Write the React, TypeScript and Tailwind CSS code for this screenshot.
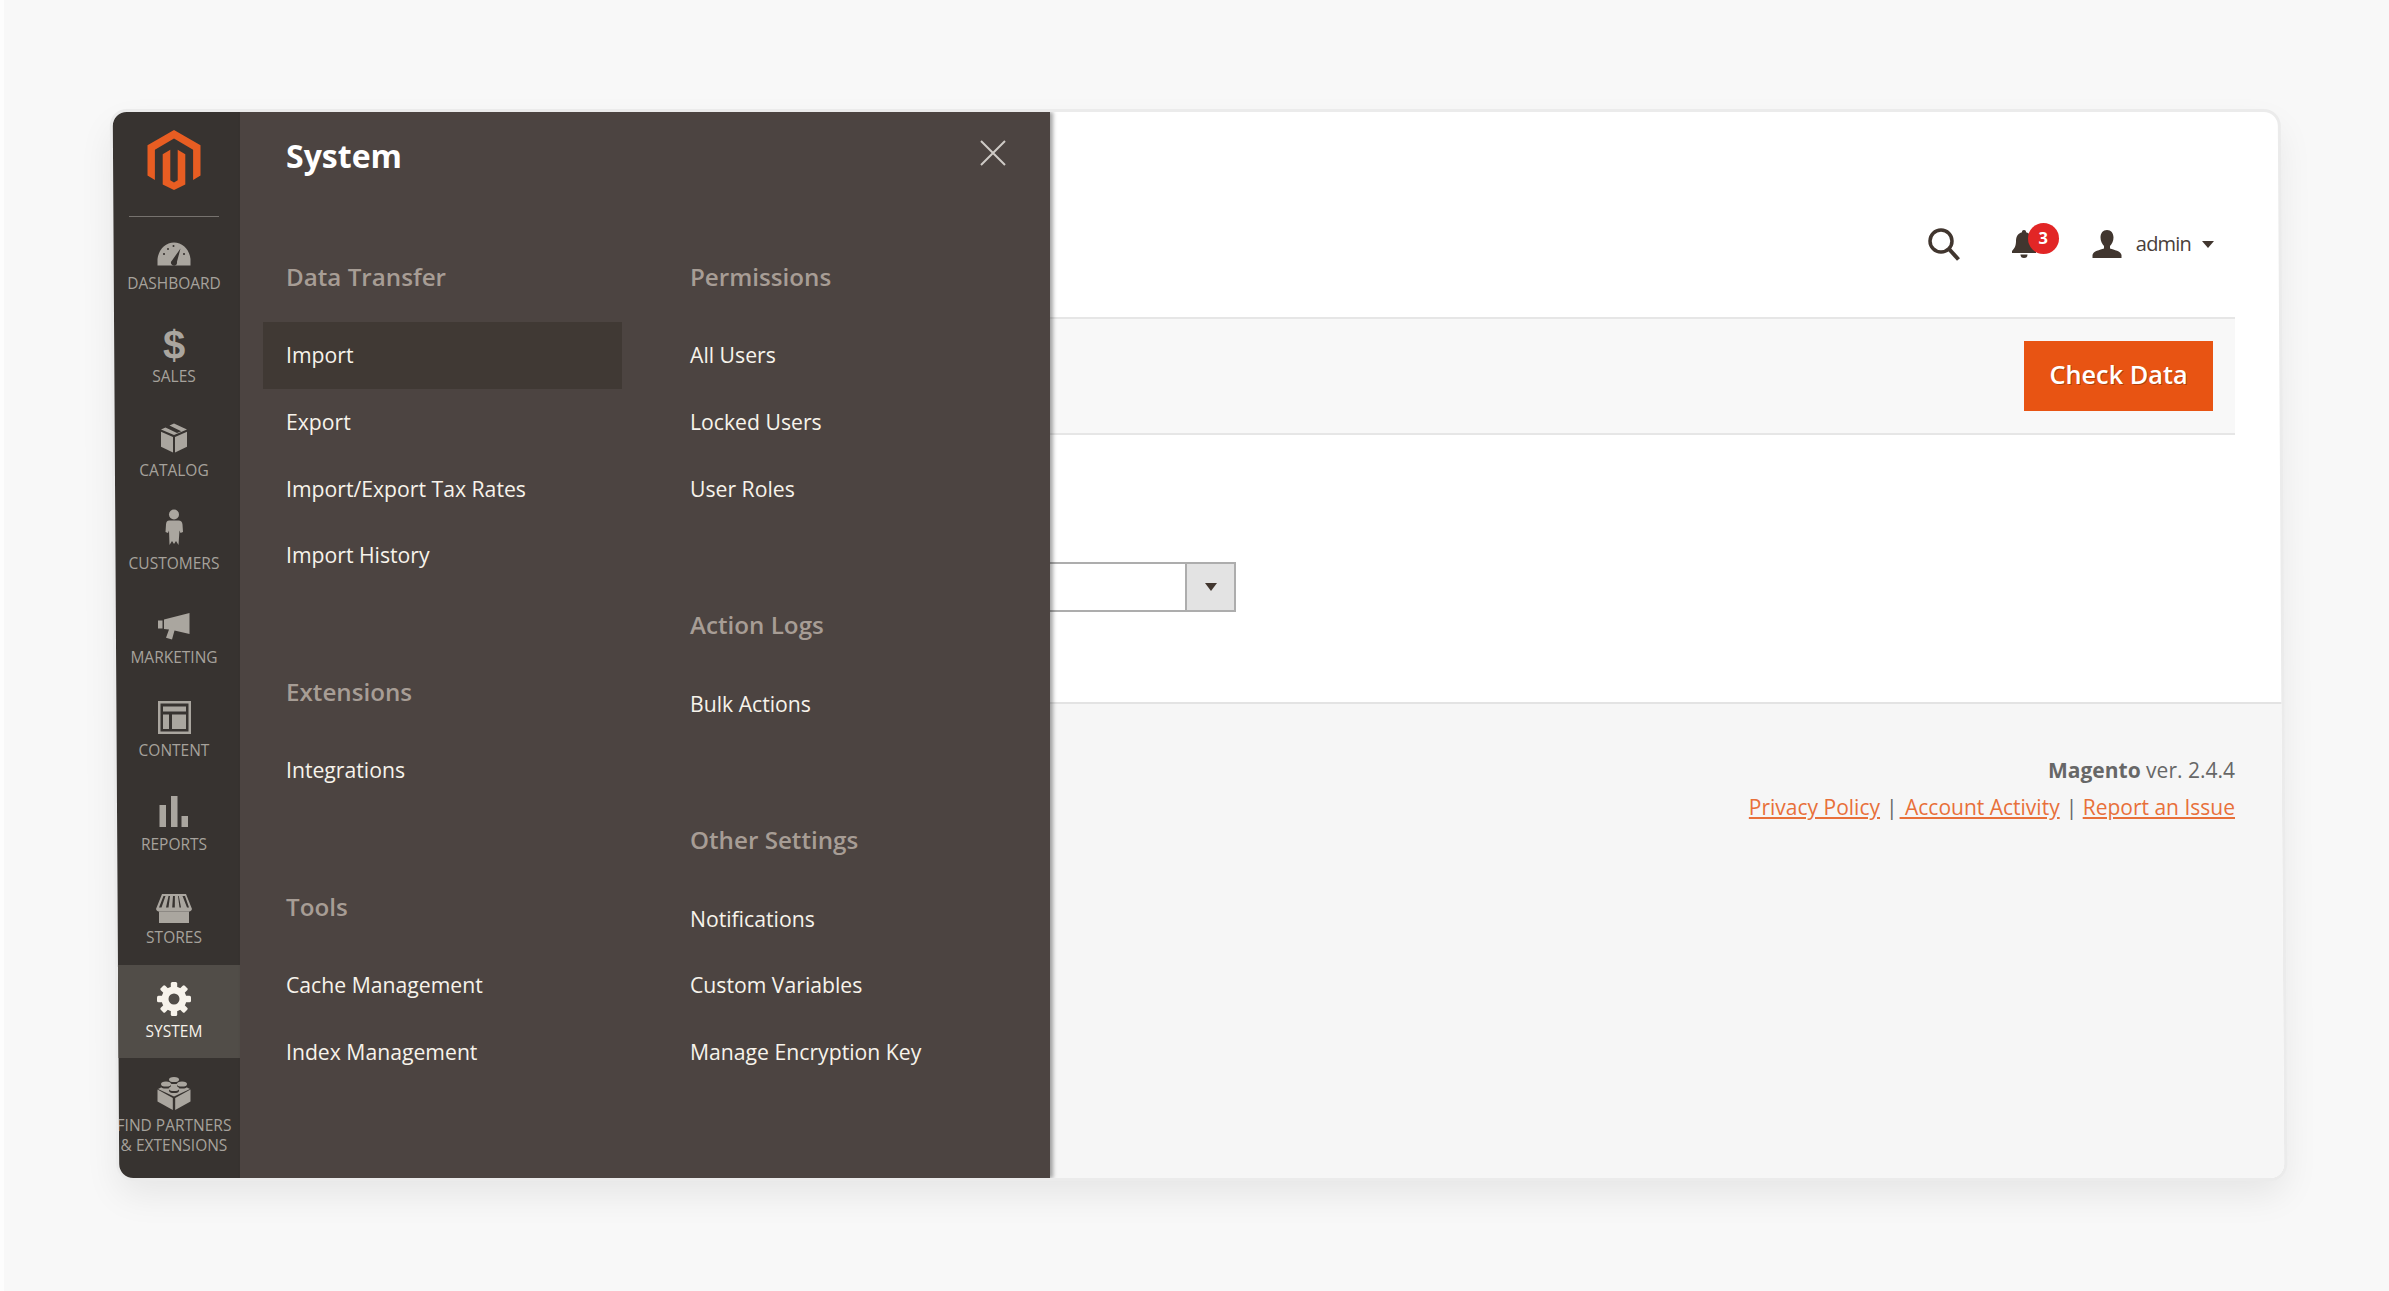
import React from "react";

const OS = "[font-family:'Open_Sans',sans-serif]";

const Logo = () => (
  <svg width="54" height="60" viewBox="0 0 53 60" className="block" fill="#e85d22">
    <path d="M26.5 0 0 15.2V45.6l7.4 4.3V19.7L26.5 8.6l19.1 11.1v30.2l7.4-4.3V15.2Z" />
    <path d="M30.2 19.8v30.4l-3.7 2.2-3.7-2.2V19.8l-7.6 4.4V54.6L26.5 60l11.3-5.4V24.2Z" />
  </svg>
);

const c = "#aaa69f";
const d = "#373330";

const Gauge = () => (
  <svg width="34" height="24" viewBox="0 0 34 24">
    <path d="M0.5 23.5V17C1.5 7.5 8.5 0.5 17 0.5S32.5 7.5 33.5 17v6.5Z" fill={c} />
    <circle cx="7" cy="12" r="1.1" fill={d} />
    <circle cx="11" cy="7" r="1" fill={d} />
    <circle cx="16.5" cy="4" r="1" fill={d} />
    <circle cx="27" cy="12" r="1.1" fill={d} />
    <path d="M15 18.5 23.5 6.5l-3.600 13.500a3 3 0 1 1-4.900-1.500Z" fill={d} />
  </svg>
);

const Box = () => (
  <svg width="28" height="30" viewBox="0 0 28 30">
    <path d="M14 0.5 27 6.5 14 12 1 6.5 5.5 4.5 17 10l4.200-1.800L9.500 2.600Z" fill={c} />
    <path d="M1 8.800 13 14v15.500L1 23.800Z" fill={c} />
    <path d="M27 8.800 15 14v15.500L27 23.800Z" fill={c} />
  </svg>
);

const Customer = () => (
  <svg width="18" height="36" viewBox="0 0 18 36">
    <circle cx="9" cy="5.500" r="5" fill={c} />
    <path d="M4.500 11.500h9c2.500 0 3.800 1.500 4 4l.500 7.500-2.500 1-1-2.500L13.500 36 11 32l-2 3-2-3-2.500 4-.500-14.500-1 2.500L.5 23 1 15.500c.2-2.500 1-4 3.500-4Z" fill={c} />
  </svg>
);

const Megaphone = () => (
  <svg width="32" height="27" viewBox="0 0 32 27">
    <rect x="0" y="7.500" width="4.500" height="8" fill={c} />
    <path d="M6 6.500 31.500 0v21L16.500 17.500 14 26.500l-6-1.800L11 16.500 6 16Z" fill={c} />
  </svg>
);

const Content = () => (
  <svg width="33" height="33" viewBox="0 0 33 33">
    <path d="M0 0h33v33H0Zm2.500 2.500v28h28v-28Z" fill={c} fillRule="evenodd" />
    <rect x="5" y="5.500" width="23" height="5" fill={c} />
    <rect x="5" y="13.500" width="6" height="14.500" fill={c} />
    <rect x="14" y="13.500" width="14" height="14.500" fill={c} />
  </svg>
);

const Bars = () => (
  <svg width="30" height="31" viewBox="0 0 30 31">
    <rect x="0.500" y="9" width="6.500" height="22" fill={c} />
    <rect x="12" y="0" width="6.500" height="31" fill={c} />
    <rect x="22.500" y="20" width="6.500" height="11" fill={c} />
  </svg>
);

const Store = () => (
  <svg width="36" height="29" viewBox="0 0 36 29">
    <path d="M6 0h24l6 15c-.5 2-2 2.500-3.500 2.500H3.500C2 17.500.5 17 0 15Zm1.500 2L3 13.500h2.500L9.500 2Zm5 0L10 13.500h2.500L14 2Zm4.500 0-.8 11.500h2.600L18.900 2Zm5 0 1.500 11.500H25L22.800 2Zm4.500 0L31 13.500h2L29 2Z" fill={c} fillRule="evenodd" />
    <path d="M3 17.500h30V29H3Z" fill={c} />
  </svg>
);

const Gear = () => (
  <svg width="34" height="34" viewBox="-17 -17 34 34">
    {[0, 45, 90, 135, 180, 225, 270, 315].map((a) => (
      <rect key={a} x="-3.200" y="-17" width="6.400" height="8" rx="1.500" fill="#f7f3eb" transform={`rotate(${a})`} />
    ))}
    <circle r="9" fill="none" stroke="#f7f3eb" strokeWidth="7" />
  </svg>
);

const Lego = () => (
  <svg width="34" height="34" viewBox="0 0 34 34">
    <path d="M0.500 13.500 15.800 22v12L0.500 25.500Z" fill={c} />
    <path d="M33.500 13.500 18.200 22v12l15.300-8.500Z" fill={c} />
    <path d="M17 5 33 13 17 20.500 1 13Z" fill={c} />
    {[[17, 3.5], [9, 8], [25, 8], [17, 12.5]].map(([x, y]) => (
      <g key={`${x}-${y}`}>
        <ellipse cx={x} cy={y + 2} rx="5" ry="2.600" fill={d} />
        <ellipse cx={x} cy={y} rx="5" ry="2.600" fill={c} />
      </g>
    ))}
  </svg>
);

function NavItem({ icon, label, active }: { icon: React.ReactNode; label: string; active?: boolean }) {
  return (
    <div className={`flex h-[93.45px] flex-col items-center ${active ? "bg-[#514d48]" : ""}`}>
      <div className="flex h-[56px] w-full items-end justify-center">{icon}</div>
      <div className={`text-center text-[15.5px] leading-[20px] ${active ? "text-[#f7f3eb]" : "text-[#a6a29c]"}`}>{label}</div>
    </div>
  );
}

function Sidebar() {
  return (
    <div className="flex w-[132px] shrink-0 flex-col bg-[#373330]">
      <div className="flex h-[105px] flex-col items-center">
        <div className="mt-[18px]"><Logo /></div>
        <div className="mt-[26px] h-[1.500px] w-[90px] bg-[#76726e]" />
      </div>
      <NavItem icon={<div className="pb-[7px]"><Gauge /></div>} label="DASHBOARD" />
      <NavItem
        icon={<span className="[font-family:'Liberation_Sans',sans-serif] pb-[1px] text-[40px] font-bold leading-[40px] text-[#aaa69f]">$</span>}
        label="SALES"
      />
      <NavItem icon={<div className="pb-[7px]"><Box /></div>} label="CATALOG" />
      <NavItem icon={<div className="pb-[8px]"><Customer /></div>} label="CUSTOMERS" />
      <NavItem icon={<div className="pb-[7px]"><Megaphone /></div>} label="MARKETING" />
      <NavItem icon={<div className="pb-[6px]"><Content /></div>} label="CONTENT" />
      <NavItem icon={<div className="pb-[6.500px]"><Bars /></div>} label="REPORTS" />
      <NavItem icon={<div className="pb-[4px]"><Store /></div>} label="STORES" />
      <NavItem icon={<div className="pb-[5px]"><Gear /></div>} label="SYSTEM" active />
      <div className="flex flex-1 flex-col items-center">
        <div className="mt-[18px]"><Lego /></div>
        <div className="mt-[5px] whitespace-nowrap text-center text-[15.5px] leading-[20px] text-[#a6a29c]">
          FIND PARTNERS
          <br />
          &amp; EXTENSIONS
        </div>
      </div>
    </div>
  );
}

function Group({ title, items, active, first }: { title: string; items: string[]; active?: string; first?: boolean }) {
  return (
    <div className={first ? "" : "mt-[81.5px]"}>
      <div className="flex h-[44px] items-center pl-[23px] text-[24.2px] font-semibold text-[#a79d95]">{title}</div>
      <div className="mt-[23px] flex flex-col">
        {items.map((t) => (
          <div
            key={t}
            className={`flex h-[66.6px] items-center whitespace-nowrap pl-[23px] text-[21.2px] text-[#f7f3eb] ${t === active ? "bg-[#403934]" : ""}`}
          >
            {t}
          </div>
        ))}
      </div>
    </div>
  );
}

function Panel() {
  return (
    <div className="relative z-10 h-full w-[810px] shrink-0 bg-[#4c4441] shadow-[3px_0_4px_rgba(0,0,0,0.35)]">
      <div className="flex h-[143px] items-start justify-between pl-[46px] pr-[44px]">
        <div className="mt-[20px] text-[32px] font-bold leading-[48px] text-white">System</div>
        <svg width="26" height="26" viewBox="0 0 26 26" className="mt-[28px]" stroke="#cfcbc6" strokeWidth="2" fill="none">
          <path d="M1 1 25 25M25 1 1 25" />
        </svg>
      </div>
      <div className="flex pl-[23px]">
        <div className="w-[359px]">
          <Group first title="Data Transfer" items={["Import", "Export", "Import/Export Tax Rates", "Import History"]} active="Import" />
          <Group title="Extensions" items={["Integrations"]} />
          <Group title="Tools" items={["Cache Management", "Index Management"]} />
        </div>
        <div className="ml-[45px] w-[359px]">
          <Group first title="Permissions" items={["All Users", "Locked Users", "User Roles"]} />
          <Group title="Action Logs" items={["Bulk Actions"]} />
          <Group title="Other Settings" items={["Notifications", "Custom Variables", "Manage Encryption Key"]} />
        </div>
      </div>
    </div>
  );
}

function TopActions() {
  return (
    <div className="flex h-[205px] items-start justify-end pr-[75px] pt-[100px]">
      <div className="flex h-[64px] items-center">
        <svg width="32" height="33" viewBox="0 0 32 33" fill="none" stroke="#41362f" strokeWidth="3.5">
          <circle cx="13" cy="13" r="11" />
          <path d="M21 21 30.5 31.5" strokeWidth="4" />
        </svg>
        <div className="relative ml-[52px] h-[28px] w-[24px]">
          <svg width="24" height="28" viewBox="0 0 24 28" fill="#41362f">
            <path d="M12 0a2 2 0 0 1 2 2.300c4 1 6 4.200 6 8.700 0 5 1.500 7.500 4 10v2H0v-2c2.500-2.500 4-5 4-10 0-4.500 2-7.700 6-8.700A2 2 0 0 1 12 0Z" />
            <path d="M8.500 24.500h7a3.500 3.500 0 0 1-7 0Z" />
          </svg>
          <div className="absolute left-[16px] top-[-7px] flex h-[31px] w-[31px] items-center justify-center rounded-full bg-[#e22626] text-[16.5px] font-bold text-white">
            3
          </div>
        </div>
        <svg width="30" height="28" viewBox="0 0 30 28" className="ml-[56px]" fill="#41362f">
          <path d="M15 0c4 0 6.500 3 6.500 7.500 0 3.500-1.500 6.500-3.500 8.500v2.500c4 1.500 11 2.500 11.500 6.500V28H.5v-3c.5-4 7.500-5 11.500-6.500V16c-2-2-3.500-5-3.500-8.500C8.500 3 11 0 15 0Z" />
        </svg>
        <div className="ml-[14px] text-[20px] leading-[30px] tracking-[-0.8px] text-[#4a403a]">admin</div>
        <div className="ml-[11px] h-0 w-0 border-x-[6px] border-t-[7px] border-x-transparent border-t-[#41362f]" />
      </div>
    </div>
  );
}

function ActionBand() {
  return (
    <div className="mr-[54px] flex h-[118px] items-center justify-end border-y-2 border-[#e6e6e6] bg-[#f8f8f8] pr-[22px]">
      <div className="flex h-[70px] w-[189px] items-center justify-center bg-[#e85413] pb-[2px] text-[25.3px] font-semibold text-white [text-shadow:1px_1px_0_rgba(0,0,0,0.25)]">
        Check Data
      </div>
    </div>
  );
}

function Body() {
  return (
    <div className="h-[267px] pt-[127px]">
      <div className="flex h-[50px] w-[186px]">
        <div className="flex-1 border-y-2 border-[#adadad] bg-white" />
        <div className="flex w-[51px] items-center justify-center border-2 border-[#adadad] bg-[#e3e3e3]">
          <div className="h-0 w-0 border-x-[6px] border-t-[8px] border-x-transparent border-t-[#41362f]" />
        </div>
      </div>
    </div>
  );
}

function Footer() {
  return (
    <div className="flex-1 border-t-2 border-[#e3e3e3] bg-[#f6f6f6] pr-[54px] pt-[48px] text-right text-[21px] leading-[37px] text-[#676767]">
      <div>
        <span className="font-bold">Magento</span> ver. 2.4.4
      </div>
      <div>
        <span className="text-[#e8703a] underline">Privacy Policy</span>
        <span className="ml-[6px]">|</span>
        <span className="ml-[2px] text-[#e8703a] underline">&nbsp;Account Activity</span>
        <span className="ml-[6px]">|</span> <span className="text-[#e8703a] underline">Report an Issue</span>
      </div>
    </div>
  );
}

export default function App() {
  return (
    <div className={`h-[1291px] w-full overflow-hidden border-l-[4px] border-[#fdfdfd] bg-[#f8f8f8] pl-[112px] pt-[112px] ${OS}`}>
      <div className="h-[1065.5px] w-[2165px] skew-x-[0.35deg] overflow-hidden rounded-[14px] bg-white shadow-[0_0_0_3px_#ebebeb,0_16px_36px_rgba(0,0,0,0.08)]">
        <div className="-mx-[8px] flex h-full -skew-x-[0.35deg]">
          <Sidebar />
          <Panel />
          <div className="flex min-w-0 flex-1 flex-col">
            <TopActions />
            <ActionBand />
            <Body />
            <Footer />
          </div>
        </div>
      </div>
    </div>
  );
}
